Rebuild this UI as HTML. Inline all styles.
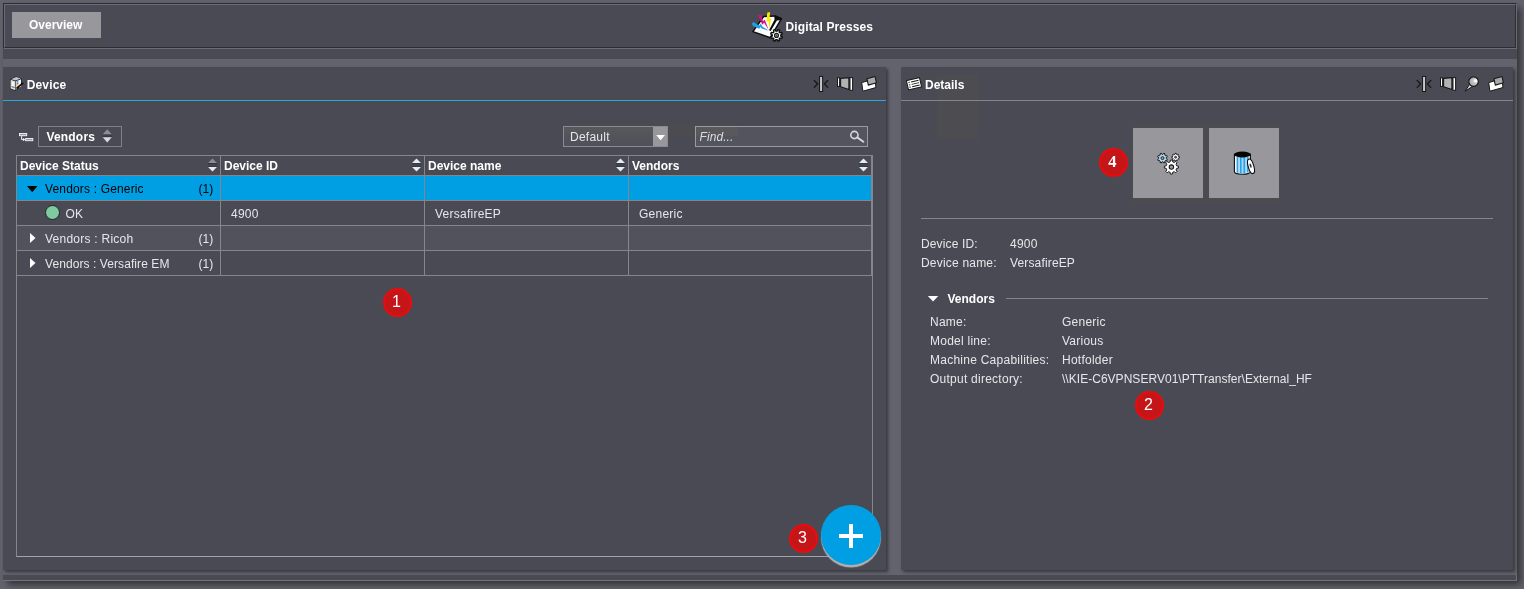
<!DOCTYPE html>
<html>
<head>
<meta charset="utf-8">
<title>Digital Presses</title>
<style>
*{box-sizing:border-box;margin:0;padding:0}
html,body{width:1524px;height:589px;overflow:hidden;background:#63636d;font-family:"Liberation Sans",sans-serif;font-size:12px;color:#fff}
.a{position:absolute}
.t{position:absolute;line-height:14px;height:14px;white-space:nowrap;color:#e6e6ea;letter-spacing:.25px}
.b{font-weight:bold;color:#fff;letter-spacing:0}
.k{color:#000}
.hl{position:absolute;height:1px;background:#85858c}
.vl{position:absolute;width:1px;background:#85858c}
.red{position:absolute;width:29px;height:29px;border-radius:50%;background:#c41618;border:2px solid #ee0a0a;color:#fff;font-size:16px;line-height:24px;text-align:center;padding-right:1.4px}
</style>
</head>
<body>
<div id="root" style="position:absolute;left:0;top:0;width:1524px;height:589px;will-change:transform">
<!-- frame shadow -->
<div class="a" style="left:3px;top:3px;width:1514px;height:578px;box-shadow:3.5px 3.5px 7px rgba(0,0,0,.53)"></div>

<!-- top bar -->
<div class="a" style="left:3px;top:3px;width:1514px;height:46px;background:#4a4a54;border:1px solid;border-color:#2c2c32 #6c6c76 #6c6c76 #2c2c32"></div>
<div class="a" style="left:4px;top:4px;width:1512px;height:44px;border:1px solid;border-color:#6c6c76 #2c2c32 #2c2c32 #6c6c76"></div>
<div class="a" style="left:3px;top:49px;width:1514px;height:10px;background:#4a4a54"></div>
<div class="a" style="left:12px;top:12px;width:89px;height:26px;background:#98989c"></div>
<div class="t b" style="left:29px;top:18px">Overview</div>
<div class="t b" style="left:785.6px;top:20px;letter-spacing:.1px">Digital Presses</div>

<!-- bottom strip -->
<div class="a" style="left:3px;top:575px;width:1514px;height:6px;background:#4a4a54;border-right:1px solid #72727c;border-bottom:1px solid #72727c"></div>

<!-- Device panel -->
<div id="dev" class="a" style="left:3px;top:67px;width:883px;height:503px;background:#4a4a54;box-shadow:2px 2px 3px rgba(0,0,0,.45)"></div>
<!-- Details panel -->
<div id="det" class="a" style="left:901px;top:67px;width:612px;height:503px;background:#4a4a54;box-shadow:2px 2px 3px rgba(0,0,0,.45)"></div>

<!-- ===== Device panel content ===== -->
<div class="t b" style="left:26.7px;top:78px;letter-spacing:.15px">Device</div>
<div class="a" style="left:3px;top:100px;width:883px;height:1px;background:#2aa7df"></div>

<!-- vendors dropdown -->
<div class="a" style="left:38px;top:126px;width:84px;height:21px;border:1px solid #7f7f8a"></div>
<div class="t b" style="left:46.4px;top:130px;letter-spacing:.2px">Vendors</div>
<svg class="a" style="left:101px;top:128px" width="13" height="16" viewBox="0 0 13 16"><path d="M6.25 1.3 L11 6.6 H1.5 Z" fill="#8c8c94"/><path d="M1.5 9 H11 L6.25 14.6 Z" fill="#d4d8e4"/><rect x="1.5" y="6.6" width="9.5" height="0.9" fill="#33333a"/><rect x="1.5" y="8.3" width="9.5" height="0.9" fill="#33333a"/></svg>

<div class="a" style="left:668px;top:126px;width:27px;height:10px;background:#4c4c50"></div>
<!-- default dropdown -->
<div class="a" style="left:563px;top:126px;width:105px;height:21px;border:1px solid #8a8a90;background:linear-gradient(#58585c,#4f5059)"></div>
<div class="a" style="left:653px;top:127px;width:14px;height:19px;background:#98989c"></div>
<svg class="a" style="left:653px;top:127px" width="14" height="19" viewBox="0 0 14 19"><path d="M3.2 8 H12 L7.6 13.3 Z" fill="#fff"/></svg>
<div class="t" style="left:570px;top:130px">Default</div>

<!-- find box -->
<div class="a" style="left:695px;top:126px;width:173px;height:21px;border:1px solid #9a9aa0;background:#53545d"></div>
<div class="a" style="left:696px;top:127px;width:42px;height:9px;background:#59595c"></div>
<div class="t" style="left:699.6px;top:130px;font-style:italic;color:#dcdce0;letter-spacing:.05px">Find...</div>
<svg class="a" style="left:848px;top:128px" width="18" height="17" viewBox="0 0 18 17"><circle cx="6.4" cy="7" r="3.6" fill="none" stroke="#d6d6da" stroke-width="1.6"/><path d="M9.2 9.4 L15.4 13.7" stroke="#d6d6da" stroke-width="1.9" stroke-linecap="round"/></svg>

<!-- table -->
<div class="a" style="left:17px;top:176px;width:854px;height:24px;background:#009fe3"></div>
<div class="a" style="left:17px;top:226px;width:854px;height:24px;background:#51525c"></div>
<div class="a" style="left:16px;top:155px;width:857px;height:402px;border:1px solid #85858c;border-bottom-color:#a2a2a8"></div>
<div class="hl" style="left:17px;top:175px;width:854px"></div>
<div class="hl" style="left:17px;top:200px;width:854px"></div>
<div class="hl" style="left:17px;top:225px;width:854px"></div>
<div class="hl" style="left:17px;top:250px;width:854px"></div>
<div class="hl" style="left:17px;top:275px;width:854px"></div>
<div class="vl" style="left:220px;top:156px;height:120px"></div>
<div class="vl" style="left:424px;top:156px;height:120px"></div>
<div class="vl" style="left:628px;top:156px;height:120px"></div>
<div class="vl" style="left:871px;top:156px;height:120px"></div>

<div class="t b" style="left:20px;top:159px">Device Status</div>
<div class="t b" style="left:224px;top:159px">Device ID</div>
<div class="t b" style="left:428px;top:159px">Device name</div>
<div class="t b" style="left:632px;top:159px">Vendors</div>
<svg class="a" style="left:206px;top:157px" width="13" height="16" viewBox="0 0 13 16"><path d="M6.5 1.4 L11.2 6.2 H1.8 Z" fill="#8c8c94"/><path d="M1.8 9.8 H11.2 L6.5 14.6 Z" fill="#e4ebf8"/><rect x="2" y="6.2" width="9" height="1" fill="#2c2c32"/><rect x="2" y="8.8" width="9" height="1" fill="#2c2c32"/></svg>
<svg class="a" style="left:410px;top:157px" width="13" height="16" viewBox="0 0 13 16"><path d="M6.5 1.4 L11.2 6.2 H1.8 Z" fill="#e4ebf8"/><path d="M1.8 9.8 H11.2 L6.5 14.6 Z" fill="#e4ebf8"/><rect x="2" y="6.2" width="9" height="1" fill="#2c2c32"/><rect x="2" y="8.8" width="9" height="1" fill="#2c2c32"/></svg>
<svg class="a" style="left:614px;top:157px" width="13" height="16" viewBox="0 0 13 16"><path d="M6.5 1.4 L11.2 6.2 H1.8 Z" fill="#e4ebf8"/><path d="M1.8 9.8 H11.2 L6.5 14.6 Z" fill="#e4ebf8"/><rect x="2" y="6.2" width="9" height="1" fill="#2c2c32"/><rect x="2" y="8.8" width="9" height="1" fill="#2c2c32"/></svg>
<svg class="a" style="left:857px;top:157px" width="13" height="16" viewBox="0 0 13 16"><path d="M6.5 1.4 L11.2 6.2 H1.8 Z" fill="#e4ebf8"/><path d="M1.8 9.8 H11.2 L6.5 14.6 Z" fill="#e4ebf8"/><rect x="2" y="6.2" width="9" height="1" fill="#2c2c32"/><rect x="2" y="8.8" width="9" height="1" fill="#2c2c32"/></svg>

<svg class="a" style="left:24px;top:183px" width="16" height="12" viewBox="0 0 16 12"><path d="M3 3 H13.5 L8.25 9.2 Z" fill="#000"/></svg>
<div class="t k" style="left:45px;top:182px;letter-spacing:.16px">Vendors : Generic</div>
<div class="t k" style="left:198.5px;top:182px;letter-spacing:0">(1)</div>

<div class="a" style="left:45.3px;top:205.4px;width:15px;height:15px;border-radius:50%;background:#7fcaa0;border:1px solid #1c2621"></div>
<div class="t" style="left:65.5px;top:207px">OK</div>
<div class="t" style="left:231px;top:207px">4900</div>
<div class="t" style="left:435px;top:207px">VersafireEP</div>
<div class="t" style="left:639px;top:207px">Generic</div>

<svg class="a" style="left:28px;top:231px" width="10" height="14" viewBox="0 0 10 14"><path d="M2 2 V12 L7.5 7 Z" fill="#fff"/></svg>
<div class="t" style="left:45px;top:232px">Vendors : Ricoh</div>
<div class="t" style="left:198.5px;top:232px;letter-spacing:0">(1)</div>

<svg class="a" style="left:28px;top:256px" width="10" height="14" viewBox="0 0 10 14"><path d="M2 2 V12 L7.5 7 Z" fill="#fff"/></svg>
<div class="t" style="left:45px;top:257px;letter-spacing:.08px">Vendors : Versafire EM</div>
<div class="t" style="left:198.5px;top:257px;letter-spacing:0">(1)</div>

<!-- FAB -->
<div class="a" style="left:821px;top:505px;width:60px;height:60px;border-radius:50%;background:#009fe3;box-shadow:0 2.6px .8px rgba(186,180,180,.95)"></div>
<div class="a" style="left:839px;top:534px;width:24px;height:4px;background:#fff"></div>
<div class="a" style="left:849px;top:524px;width:4px;height:24px;background:#fff"></div>

<div class="red" style="left:382.7px;top:287.6px">1</div>
<div class="red" style="left:788.7px;top:523.7px">3</div>

<!-- ===== Details panel content ===== -->
<div class="a" style="left:937px;top:75px;width:41px;height:64px;background:#4d4d51"></div>
<div class="t b" style="left:925px;top:78px">Details</div>
<div class="hl" style="left:901px;top:100px;width:612px"></div>

<div class="a" style="left:1131px;top:126px;width:150px;height:77px;background:#4b4b50"></div>
<div class="a" style="left:1133px;top:128px;width:70px;height:70px;background:#98989c"></div>
<div class="a" style="left:1209px;top:128px;width:70px;height:70px;background:#98989c"></div>
<div class="red" style="left:1098.7px;top:147.7px;font-family:'Liberation Serif',serif;font-weight:bold;font-size:16.5px;line-height:23px">4</div>

<div class="hl" style="left:921px;top:218px;width:572px"></div>

<div class="t" style="left:921px;top:237px;letter-spacing:.13px">Device ID:</div>
<div class="t" style="left:1010px;top:237px">4900</div>
<div class="t" style="left:921px;top:256px;letter-spacing:.2px">Device name:</div>
<div class="t" style="left:1010px;top:256px;letter-spacing:.15px">VersafireEP</div>

<svg class="a" style="left:925px;top:293px" width="16" height="12" viewBox="0 0 16 12"><path d="M2.8 3 H13.3 L8.05 8.5 Z" fill="#fff"/></svg>
<div class="t b" style="left:947.5px;top:292px">Vendors</div>
<div class="hl" style="left:1006px;top:298px;width:482px"></div>

<div class="t" style="left:930px;top:315px">Name:</div>
<div class="t" style="left:1062px;top:315px">Generic</div>
<div class="t" style="left:930px;top:334px">Model line:</div>
<div class="t" style="left:1062px;top:334px">Various</div>
<div class="t" style="left:930px;top:353px">Machine Capabilities:</div>
<div class="t" style="left:1062px;top:353px">Hotfolder</div>
<div class="t" style="left:930px;top:372px">Output directory:</div>
<div class="t" style="left:1062px;top:372px;letter-spacing:.03px">\\KIE-C6VPNSERV01\PTTransfer\External_HF</div>

<div class="red" style="left:1134.7px;top:390.7px">2</div>

<!--ICONS-->
<svg class="a" style="left:812px;top:74px" width="18" height="20" viewBox="0 0 18 20" ><rect x="7.55" y="2.4" width="3.1" height="15.1" fill="#c6c6c6" stroke="#17171a" stroke-width="1"/><path d="M2.2 6.5 L5.6 9.8 L2.3 13.4" fill="none" stroke="#17171a" stroke-width="1.3" stroke-linecap="round" stroke-linejoin="round"/><path d="M15.8 6.5 L12.4 9.8 L15.7 13.4" fill="none" stroke="#17171a" stroke-width="1.3" stroke-linecap="round" stroke-linejoin="round"/></svg>
<svg class="a" style="left:836px;top:74px" width="18" height="20" viewBox="0 0 18 20" ><rect x="1.5" y="3.8" width="2.1" height="8.6" fill="#fff" stroke="#17171a" stroke-width="1"/><path d="M4.6 4.4 L12.9 3.6 L12.9 15.4 L4.6 12.8 Z" fill="#b2b2b2" stroke="#17171a" stroke-width="1.1" stroke-linejoin="round"/><rect x="14.0" y="3.6" width="2.6" height="12.7" fill="#fff" stroke="#17171a" stroke-width="1"/></svg>
<svg class="a" style="left:860px;top:74px" width="18" height="20" viewBox="0 0 18 20" ><path d="M1.7 8.6 L14.6 4.8 L16 13.5 L2.9 17.2 Z" fill="#fff" stroke="#17171a" stroke-width="1" stroke-linejoin="round"/><path d="M7 4.8 L15 2.5 L16.4 8.7 L8.3 11.1 Z" fill="#a9a9a9" stroke="#17171a" stroke-width="1.1" stroke-linejoin="round"/></svg>
<svg class="a" style="left:1415px;top:74px" width="18" height="20" viewBox="0 0 18 20" ><rect x="7.55" y="2.4" width="3.1" height="15.1" fill="#c6c6c6" stroke="#17171a" stroke-width="1"/><path d="M2.2 6.5 L5.6 9.8 L2.3 13.4" fill="none" stroke="#17171a" stroke-width="1.3" stroke-linecap="round" stroke-linejoin="round"/><path d="M15.8 6.5 L12.4 9.8 L15.7 13.4" fill="none" stroke="#17171a" stroke-width="1.3" stroke-linecap="round" stroke-linejoin="round"/></svg>
<svg class="a" style="left:1439px;top:74px" width="18" height="20" viewBox="0 0 18 20" ><rect x="1.5" y="3.8" width="2.1" height="8.6" fill="#fff" stroke="#17171a" stroke-width="1"/><path d="M4.6 4.4 L12.9 3.6 L12.9 15.4 L4.6 12.8 Z" fill="#b2b2b2" stroke="#17171a" stroke-width="1.1" stroke-linejoin="round"/><rect x="14.0" y="3.6" width="2.6" height="12.7" fill="#fff" stroke="#17171a" stroke-width="1"/></svg>
<svg class="a" style="left:1463px;top:74px" width="18" height="20" viewBox="0 0 18 20" ><defs><radialGradient id="pg" cx="0.72" cy="0.42" r="0.6"><stop offset="0" stop-color="#fff"/><stop offset="0.22" stop-color="#f4f4f4"/><stop offset="0.45" stop-color="#c2c2c2"/><stop offset="1" stop-color="#b2b2b2"/></radialGradient></defs><path d="M6.6 10.2 L2.1 17.2 L9.4 12.6 Z" fill="#cfcfcf" stroke="#17171a" stroke-width="1" stroke-linejoin="round"/><circle cx="10.6" cy="7.6" r="4.75" fill="url(#pg)" stroke="#17171a" stroke-width="1.1"/></svg>
<svg class="a" style="left:1487px;top:74px" width="18" height="20" viewBox="0 0 18 20" ><path d="M1.7 8.6 L14.6 4.8 L16 13.5 L2.9 17.2 Z" fill="#fff" stroke="#17171a" stroke-width="1" stroke-linejoin="round"/><path d="M7 4.8 L15 2.5 L16.4 8.7 L8.3 11.1 Z" fill="#a9a9a9" stroke="#17171a" stroke-width="1.1" stroke-linejoin="round"/></svg>
<svg class="a" style="left:17px;top:130px" width="18" height="14" viewBox="0 0 18 14" ><rect x="2.5" y="3.5" width="7.2" height="2.2" fill="#9a9aa2" stroke="#f4f4f6" stroke-width="0.9"/><rect x="8.6" y="8.5" width="7.2" height="2.2" fill="#9a9aa2" stroke="#f4f4f6" stroke-width="0.9"/><path d="M4.6 6.2 V9.6 H8" fill="none" stroke="#f4f4f6" stroke-width="1"/><path d="M6.6 8.2 V11" stroke="#f4f4f6" stroke-width="0.9"/></svg>
<svg class="a" style="left:8px;top:74px" width="18" height="20" viewBox="0 0 18 20" ><path d="M2 5.2 L8.2 2.4 L13.6 4.4 L13.6 11.2 L7.6 17 L2 15 Z" fill="#1c1c1e"/><path d="M2.6 5.8 L7.4 7.2 L7.4 16.2 L2.6 14.6 Z" fill="#dcdcdc"/><path d="M3 5.2 L8.2 3 L12.8 4.6 L7.8 6.6 Z" fill="#c4c4c4"/><path d="M8.2 7.2 L13 5.2 L13 11 L8.2 15.8 Z" fill="#f6f6f6"/><path d="M4.2 7.8 L5.6 8.2 L5.6 12.6 L4.2 12.2 Z" fill="#fff"/><path d="M3.6 12.6 L6.6 13.6" stroke="#444" stroke-width="0.8"/><rect x="8.9" y="6.6" width="1.5" height="1.9" fill="#35b6ee"/><rect x="8.9" y="8.6" width="1.5" height="1.9" fill="#e0409a"/><rect x="8.9" y="10.6" width="1.5" height="1.9" fill="#f2e030"/><path d="M9.2 14 L14.6 9.4" stroke="#0c0c0c" stroke-width="1.9" stroke-linecap="round"/><path d="M11.4 13.4 L13.4 11.8" stroke="#e8e8e8" stroke-width="0.7"/></svg>
<svg class="a" style="left:904px;top:74px" width="20" height="20" viewBox="0 0 20 20" ><g transform="rotate(-13 10 9.8)"><rect x="3.3" y="5.1" width="13.4" height="9.4" fill="#fff" stroke="#1a1a1c" stroke-width="1"/><path d="M7.6 7.4 H15.2 M7.6 9.8 H15.2 M7.6 12.2 H15.2" stroke="#161618" stroke-width="0.95"/><path d="M4.8 7.4 H6.2 M4.8 9.8 H6.2 M4.8 12.2 H6.2" stroke="#161618" stroke-width="0.95"/></g></svg>
<svg class="a" style="left:748px;top:8px" width="40" height="38" viewBox="0 0 40 38" ><path d="M15.6 8.6 L27.4 7.9 L33.4 10.8 L22.2 29.7 L4.9 23.6 Z" fill="#fff" stroke="#0e0e10" stroke-width="1.5" stroke-linejoin="round"/><path d="M26.2 8.5 L27.5 7.8 L33.7 10.7 L32.8 12.2 L28.9 12.4 L22.7 22.9 L21 22.2 L26.6 11.4 Z" fill="#0e0e10"/><path d="M3.9 15.6 L5.4 14 L11.2 17.6 L12.7 15.4 L14.4 18.4 L20.8 22.8 L13.6 20.6 L12.5 19 L11.3 20.8 L5 18 Z" fill="#1e9fe8"/><path d="M10.2 7.4 L12.9 6.4 L15.1 13.2 L16.7 11.4 L20.7 22 L16.1 14.8 L14.3 16.8 Z" fill="#d6117f"/><path d="M19.2 4.8 L22.1 4.1 L21.5 10.8 L23.2 10.2 L21.2 21.4 L20.5 13.1 L18.6 14.2 Z" fill="#ffe600"/><path d="M32.75 28.04 L34.31 28.89 L33.66 30.45 L31.96 29.95 L31.05 30.86 L31.55 32.56 L29.99 33.21 L29.14 31.65 L27.86 31.65 L27.01 33.21 L25.45 32.56 L25.95 30.86 L25.04 29.95 L23.34 30.45 L22.69 28.89 L24.25 28.04 L24.25 26.76 L22.69 25.91 L23.34 24.35 L25.04 24.85 L25.95 23.94 L25.45 22.24 L27.01 21.59 L27.86 23.15 L29.14 23.15 L29.99 21.59 L31.55 22.24 L31.05 23.94 L31.96 24.85 L33.66 24.35 L34.31 25.91 L32.75 26.76 Z" fill="#fff" stroke="#0c0c0e" stroke-width="1.35" stroke-linejoin="round"/><circle cx="28.5" cy="27.4" r="2.0" fill="#a0a0a0" stroke="#16161a" stroke-width="1.1"/><circle cx="28.5" cy="27.4" r="0.6" fill="#333"/></svg>
<svg class="a" style="left:1148px;top:144px" width="40" height="38" viewBox="0 0 40 38" ><path d="M18.26 14.66 L19.34 15.34 L18.80 16.65 L17.56 16.36 L16.76 17.16 L17.05 18.40 L15.74 18.94 L15.06 17.86 L13.94 17.86 L13.26 18.94 L11.95 18.40 L12.24 17.16 L11.44 16.36 L10.20 16.65 L9.66 15.34 L10.74 14.66 L10.74 13.54 L9.66 12.86 L10.20 11.55 L11.44 11.84 L12.24 11.04 L11.95 9.80 L13.26 9.26 L13.94 10.34 L15.06 10.34 L15.74 9.26 L17.05 9.80 L16.76 11.04 L17.56 11.84 L18.80 11.55 L19.34 12.86 L18.26 13.54 Z" fill="#b4dcf2" stroke="#1a1a1c" stroke-width="1" stroke-linejoin="round"/><circle cx="14.5" cy="14.1" r="1.5" fill="#9a9aa0" stroke="#1a1a1c" stroke-width="0.9"/><path d="M30.51 12.48 L31.46 12.65 L31.46 13.75 L30.51 13.92 L30.17 14.75 L30.72 15.54 L29.94 16.32 L29.15 15.77 L28.32 16.11 L28.15 17.06 L27.05 17.06 L26.88 16.11 L26.05 15.77 L25.26 16.32 L24.48 15.54 L25.03 14.75 L24.69 13.92 L23.74 13.75 L23.74 12.65 L24.69 12.48 L25.03 11.65 L24.48 10.86 L25.26 10.08 L26.05 10.63 L26.88 10.29 L27.05 9.34 L28.15 9.34 L28.32 10.29 L29.15 10.63 L29.94 10.08 L30.72 10.86 L30.17 11.65 Z" fill="#fff" stroke="#1a1a1c" stroke-width="1" stroke-linejoin="round"/><circle cx="27.6" cy="13.2" r="1.0" fill="#777" stroke="#1a1a1c" stroke-width="0.8"/><path d="M28.65 21.84 L30.44 22.15 L30.44 24.05 L28.65 24.36 L28.00 25.92 L29.04 27.41 L27.71 28.74 L26.22 27.70 L24.66 28.35 L24.35 30.14 L22.45 30.14 L22.14 28.35 L20.58 27.70 L19.09 28.74 L17.76 27.41 L18.80 25.92 L18.15 24.36 L16.36 24.05 L16.36 22.15 L18.15 21.84 L18.80 20.28 L17.76 18.79 L19.09 17.46 L20.58 18.50 L22.14 17.85 L22.45 16.06 L24.35 16.06 L24.66 17.85 L26.22 18.50 L27.71 17.46 L29.04 18.79 L28.00 20.28 Z" fill="#fff" stroke="#1a1a1c" stroke-width="1" stroke-linejoin="round"/><circle cx="23.4" cy="23.1" r="2.2" fill="#9a9aa0" stroke="#1a1a1c" stroke-width="1.1"/></svg>
<svg class="a" style="left:1224px;top:144px" width="40" height="38" viewBox="0 0 40 38" ><path d="M10.4 10.3 V27.6 C10.4 31.2 26.4 31.2 26.4 27.6 V10.3 Z" fill="#f2f8fc" stroke="#0c0c0e" stroke-width="1.1"/><rect x="12.6" y="13" width="1.7" height="15.6" fill="#2aa2ea"/><rect x="14.3" y="13" width="1.0" height="16" fill="#8fd0f4"/><rect x="15.8" y="13" width="2.0" height="16.4" fill="#2aa2ea"/><rect x="17.8" y="13" width="1.0" height="16.4" fill="#8fd0f4"/><rect x="19.3" y="13" width="2.0" height="16.4" fill="#2aa2ea"/><rect x="21.3" y="13" width="1.0" height="16" fill="#8fd0f4"/><rect x="22.8" y="13" width="1.8" height="15.4" fill="#2aa2ea"/><ellipse cx="18.4" cy="10.5" rx="8.4" ry="3.0" fill="#050506"/><g transform="rotate(-16 27.0 22.3)"><ellipse cx="27.0" cy="22.3" rx="2.8" ry="7.5" fill="#fff" stroke="#0c0c0e" stroke-width="1.1"/><ellipse cx="26.8" cy="21.6" rx="0.9" ry="2.2" fill="#333"/></g></svg>
<!--/ICONS-->
</div>
</body>
</html>
